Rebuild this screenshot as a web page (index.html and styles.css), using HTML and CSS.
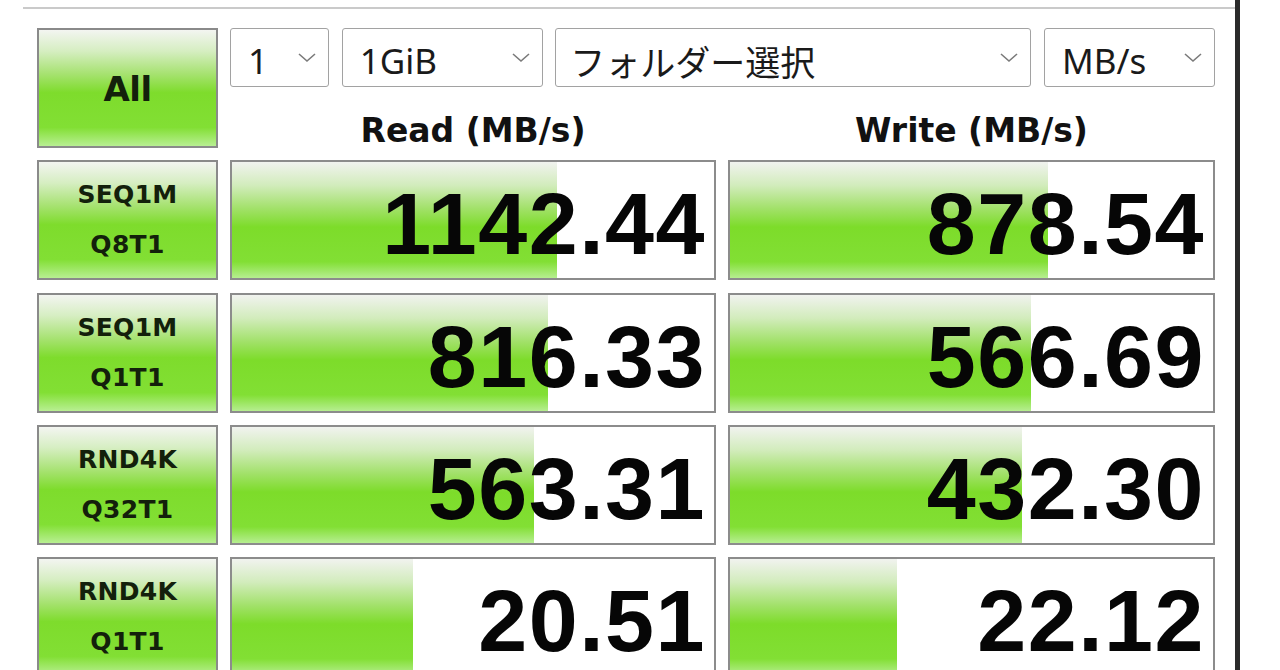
FILE: index.html
```html
<!DOCTYPE html>
<html lang="ja">
  <head>
    <meta charset="UTF-8" />
    <meta name="viewport" content="width=device-width, initial-scale=1.0" />
    <title>CrystalDiskMark</title>
    <link rel="stylesheet" href="styles.css">
  </head>
  <body>
    <div class="screen">
      <div class="window">
        <div class="board">
          <button class="run all">All</button>

          <div class="controls">
            <div class="picks">
              <div class="pick count">
                <span>1</span>
                <svg class="chev" viewBox="0 0 18 10"><polyline points="1,1 9,8 17,1" /></svg>
              </div>
              <div class="pick size">
                <span>1GiB</span>
                <svg class="chev" viewBox="0 0 18 10"><polyline points="1,1 9,8 17,1" /></svg>
              </div>
              <div class="pick drive">
                <span>フォルダー選択</span>
                <svg class="chev" viewBox="0 0 18 10"><polyline points="1,1 9,8 17,1" /></svg>
              </div>
              <div class="pick unit">
                <span>MB/s</span>
                <svg class="chev" viewBox="0 0 18 10"><polyline points="1,1 9,8 17,1" /></svg>
              </div>
            </div>
            <div class="heads">
              <div>Read (MB/s)</div>
              <div>Write (MB/s)</div>
            </div>
          </div>

          <!-- sequential 1MiB, queue 8 -->
          <button class="run"><span>SEQ1M</span><span>Q8T1</span></button>
          <div class="meter"><div class="fill" style="width: 67.4%"></div><span class="value">1142.44</span></div>
          <div class="meter"><div class="fill" style="width: 65.8%"></div><span class="value">878.54</span></div>

          <!-- sequential 1MiB, queue 1 -->
          <button class="run"><span>SEQ1M</span><span>Q1T1</span></button>
          <div class="meter"><div class="fill" style="width: 65.6%"></div><span class="value">816.33</span></div>
          <div class="meter"><div class="fill" style="width: 62.4%"></div><span class="value">566.69</span></div>

          <!-- random 4KiB, queue 32 -->
          <button class="run"><span>RND4K</span><span>Q32T1</span></button>
          <div class="meter"><div class="fill" style="width: 62.7%"></div><span class="value">563.31</span></div>
          <div class="meter"><div class="fill" style="width: 60.4%"></div><span class="value">432.30</span></div>

          <!-- random 4KiB, queue 1 -->
          <button class="run"><span>RND4K</span><span>Q1T1</span></button>
          <div class="meter"><div class="fill" style="width: 37.6%"></div><span class="value">20.51</span></div>
          <div class="meter"><div class="fill" style="width: 34.6%"></div><span class="value">22.12</span></div>
        </div>
      </div>
    </div>
  </body>
</html>
```

FILE: styles.css
```css
html,
body {
  margin: 0;
  background: #fff;
  overflow: hidden;
}

.screen {
  box-sizing: border-box;
  width: 1240px;
  height: 100vh;
  padding: 7px 0 0 23px;
  border-right: 5px solid #2b2b2b;
}

.window {
  border-top: 2px solid #cacaca;
  padding: 19px 0 0 14px;
}

.board {
  display: grid;
  grid-template-columns: 181px 486px 487px;
  grid-auto-rows: 120px;
  column-gap: 12px;
  row-gap: 12.33px;
}

/* green test buttons */
.run {
  box-sizing: border-box;
  margin: 0;
  padding: 0;
  border: 2px solid #8a8a8a;
  background: linear-gradient(
    to bottom,
    #f3f5f1 0%,
    #d6eec2 18%,
    #a6e270 38%,
    #7edc2c 54%,
    #82df34 84%,
    #b8ef92 100%
  );
  color: #13200b;
  font-family: "DejaVu Sans", sans-serif;
  font-weight: bold;
  font-size: 25px;
  letter-spacing: 0.3px;
  line-height: 50px;
  display: flex;
  flex-direction: column;
  align-items: center;
  justify-content: center;
}

.run.all {
  font-size: 34px;
  letter-spacing: -0.5px;
  padding-top: 2px;
}

.controls {
  grid-column: 2 / 4;
  display: flex;
  flex-direction: column;
}

.picks {
  display: flex;
  justify-content: space-between;
  height: 59px;
}

.pick {
  box-sizing: border-box;
  display: flex;
  align-items: center;
  justify-content: space-between;
  border: 1.5px solid #a2a2a2;
  border-radius: 3px;
  padding: 6px 12px 0 17px;
  font-family: "Noto Sans", "Noto Sans CJK JP", sans-serif;
  font-size: 35px;
  color: #1a1a1a;
  background: #fff;
}

.pick.count { width: 99px; }
.pick.size { width: 201px; }
.pick.drive { width: 476px; padding-left: 14px; }
.pick.unit { width: 171px; }

.chev {
  width: 18px;
  height: 10px;
  margin-top: -6px;
  fill: none;
  stroke: #7a7a7a;
  stroke-width: 1.6;
}

.heads {
  display: grid;
  grid-template-columns: 486px 487px;
  column-gap: 12px;
  padding-top: 25px;
  text-align: center;
  font-family: "DejaVu Sans", sans-serif;
  font-weight: bold;
  font-size: 33px;
  line-height: 38px;
  color: #111;
}

/* result cells with a bar behind the number */
.meter {
  position: relative;
  box-sizing: border-box;
  border: 2px solid #8c8c8c;
  background: #fff;
  display: flex;
  align-items: center;
  justify-content: flex-end;
  padding: 8px 8px 0 0;
  overflow: hidden;
}

.fill {
  position: absolute;
  left: 0;
  top: 0;
  bottom: 0;
  background: linear-gradient(
    to bottom,
    #f1f3ef 0%,
    #d2ecbc 20%,
    #a2e16a 40%,
    #7ddc2a 56%,
    #82df34 86%,
    #b6ee90 100%
  );
}

.value {
  position: relative;
  font-family: "Liberation Sans", Arial, sans-serif;
  font-weight: bold;
  font-size: 88px;
  letter-spacing: 1.5px;
  line-height: 1;
  color: #060606;
}
```
